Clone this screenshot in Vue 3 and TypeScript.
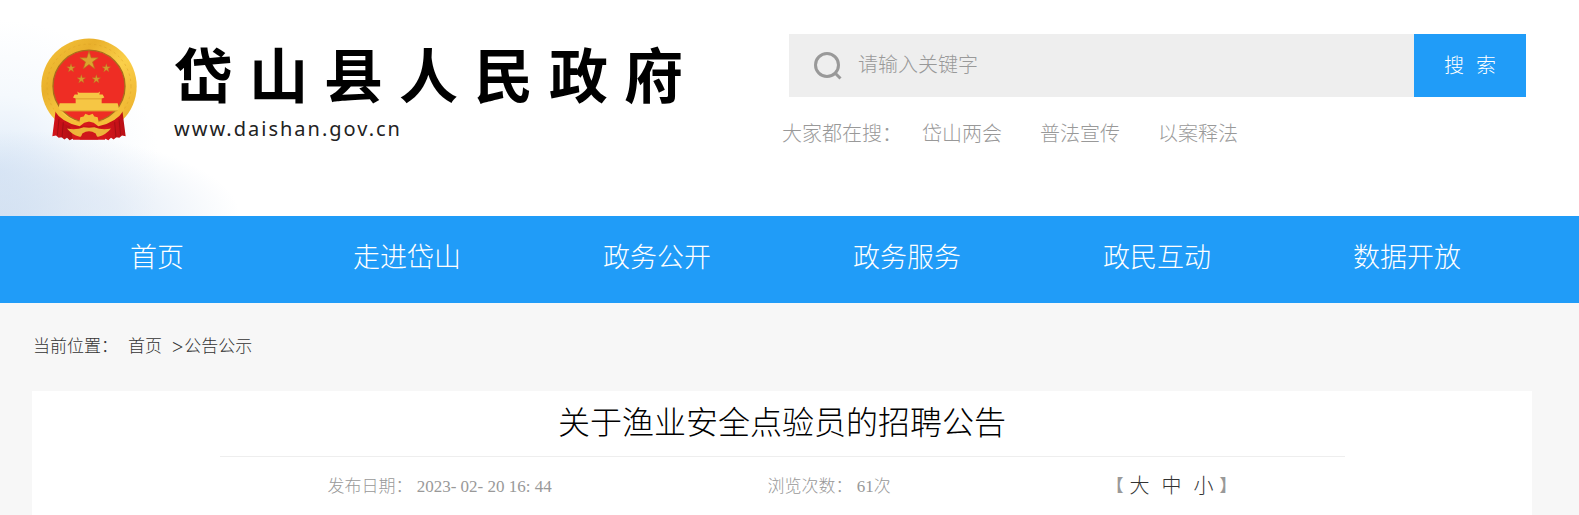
<script setup lang="ts">
import { ref } from 'vue'

const siteName: string[] = [...'岱山县人民政府']
const keyword = ref('')
const hotWords: string[] = ['岱山两会', '普法宣传', '以案释法']
const navItems: string[] = ['首页', '走进岱山', '政务公开', '政务服务', '政民互动', '数据开放']
const textSizes: string[] = ['大', '中', '小']
const smallStars = [
  { x: 124, y: 114, r: 14 },
  { x: 230, y: 114, r: 14 },
  { x: 155, y: 147, r: 14 },
  { x: 200, y: 147, r: 14 },
]

function star(cx: number, cy: number, r: number): string {
  const points: string[] = []
  for (let i = 0; i < 10; i++) {
    const radius = i % 2 === 0 ? r : r * 0.38
    const angle = -Math.PI / 2 + (i * Math.PI) / 5
    points.push(`${(cx + radius * Math.cos(angle)).toFixed(1)},${(cy + radius * Math.sin(angle)).toFixed(1)}`)
  }
  return points.join(' ')
}
</script>

<template>
  <div class="page">
    <header class="header">
      <div class="container header-row">
        <a class="brand" href="#">
          <svg class="emblem" viewBox="34 24 288 308" aria-hidden="true">
            <defs>
              <linearGradient id="gold" x1="0" y1="0" x2="1" y2="1">
                <stop offset="0" stop-color="#f7c63a" />
                <stop offset="0.3" stop-color="#e9b02c" />
                <stop offset="0.55" stop-color="#fbd04a" />
                <stop offset="1" stop-color="#e8a824" />
              </linearGradient>
              <linearGradient id="drape" x1="0" y1="0" x2="1" y2="0">
                <stop offset="0" stop-color="#d3141a" />
                <stop offset="0.35" stop-color="#a80d12" />
                <stop offset="0.6" stop-color="#e0191f" />
                <stop offset="1" stop-color="#b90f15" />
              </linearGradient>
            </defs>
            <circle cx="178" cy="168" r="143" fill="url(#gold)" />
            <circle cx="178" cy="168" r="126" fill="none" stroke="#dba126" stroke-width="3" stroke-dasharray="7 9" opacity="0.5" />
            <circle cx="178" cy="168" r="108" fill="#ee2d24" stroke="#a96c1c" stroke-width="4" />
            <polygon :points="star(178, 92, 29)" fill="#dba52f" stroke="#b9701d" stroke-width="2" />
            <polygon v-for="s in smallStars" :key="`${s.x}-${s.y}`" :points="star(s.x, s.y, s.r)" fill="#d59a2d" stroke="#b9601d" stroke-width="1" />
            <path d="M143 184l5 4h58l5-4-2 9h10l5 9-8 3v14h48l6 24H84l6-24h48v-14l-8-3 5-9h10z" fill="#f6c644" />
            <path d="M136 206h82M88 242h180" stroke="#cf8d22" stroke-width="2" />
            <path d="M78 240q14 24 53 33l22 5-21 46-12 6-8-7-8 5-8-7-9 2-8-7-11 2zM278 240q-14 24-53 33l-22 5 21 46 12 6 8-7 8 5 8-7 9 2 8-7 11 2z" fill="url(#drape)" />
            <path d="M118 275h120l-12 54H130z" fill="#d7181c" />
            <path d="M79 243q23 37 71 43l28 2 28-2q48-6 71-43l-7 28q-32 26-92 27-60-1-92-27z" fill="#c91218" />
            <path d="M76 214q20 48 73 62l3-15 10-2 5-8 11 4 11-4 5 8 10 2 3 15q53-14 73-62l4 24q-24 40-78 50l-14-10-14-4-14 4-14 10q-54-10-78-50z" fill="#f4be38" />
            <path d="M112 295q27 6 50-4l16 2 16-2q23 10 50 4-14 18-38 25l-28-2-28 2q-24-7-38-25z" fill="#edb43a" />
            <path d="M158 310q20-14 40 0l8 18h-56z" fill="#cf171b" />
            <path d="M88 266l-5 50M101 276l-4 46M268 266l5 50M255 276l4 46" stroke="#8e0b10" stroke-width="3" opacity="0.6" />
          </svg>
          <span class="brand-text">
            <strong class="site-name">
              <span v-for="char in siteName" :key="char">{{ char }}</span>
            </strong>
            <span class="site-url">www.daishan.gov.cn</span>
          </span>
        </a>

        <div class="search-area">
          <form class="search" role="search" @submit.prevent>
            <label class="search-field">
              <svg class="search-icon" viewBox="0 0 28 28" aria-hidden="true">
                <circle cx="13" cy="13" r="11.5" />
                <path d="M20.5 20.5l6 6" />
              </svg>
              <input v-model="keyword" class="search-input" type="text" placeholder="请输入关键字" aria-label="请输入关键字" />
            </label>
            <button class="search-button" type="submit"><span>搜</span><span>索</span></button>
          </form>
          <div class="hot">
            <span>大家都在搜：</span>
            <div class="hot-words">
              <a v-for="word in hotWords" :key="word" href="#">{{ word }}</a>
            </div>
          </div>
        </div>
      </div>
    </header>

    <nav class="nav">
      <div class="container nav-row">
        <a v-for="item in navItems" :key="item" href="#">{{ item }}</a>
      </div>
    </nav>

    <main class="container main">
      <div class="breadcrumb">
        <span>当前位置：</span>
        <a href="#">首页</a>
        <span class="current"><span class="separator">&gt;</span><a href="#">公告公示</a></span>
      </div>
      <article class="article">
        <h1 class="title">关于渔业安全点验员的招聘公告</h1>
        <div class="meta">
          <span>发布日期： 2023- 02- 20 16: 44</span>
          <span>浏览次数： 61次</span>
          <div class="sizes">
            <span class="bracket">【</span>
            <div class="size-buttons">
              <button v-for="size in textSizes" :key="size" type="button">{{ size }}</button>
            </div>
            <span class="bracket">】</span>
          </div>
        </div>
      </article>
    </main>
  </div>
</template>

<style>
body {
  margin: 0;
  background: #f7f7f7;
}
</style>

<style scoped>
.page {
  font-family: "Liberation Serif", "Noto Sans CJK SC", serif;
  font-weight: 300;
  color: #333;
}

a {
  color: inherit;
  text-decoration: none;
}

button,
input {
  padding: 0;
  border: 0;
  background: none;
  font: inherit;
  color: inherit;
}

button {
  cursor: pointer;
}

.container {
  padding: 0 47px 0 32px;
}

.header {
  background:
    radial-gradient(ellipse 240px 86px at 0 100%, rgba(196, 214, 236, 0.6), rgba(206, 221, 240, 0.5) 50%, rgba(255, 255, 255, 0)),
    radial-gradient(ellipse 160px 150px at 0 170px, rgba(215, 230, 247, 0.8), rgba(235, 243, 251, 0.5) 50%, rgba(255, 255, 255, 0)),
    #fff;
}

.header-row {
  display: flex;
  justify-content: space-between;
  align-items: flex-start;
  min-height: 216px;
}

.brand {
  display: flex;
  gap: 37px;
  padding: 38px 0 0 9px;
  color: #000;
}

.emblem {
  width: 96px;
  height: 103px;
}

.brand-text {
  display: flex;
  flex-direction: column;
}

.site-name {
  display: flex;
  gap: 16px;
  padding-top: 3px;
  font-size: 59px;
  font-weight: 700;
  line-height: 74px;
}

.site-url {
  font-family: "Noto Sans", sans-serif;
  font-size: 20px;
  font-weight: 400;
  letter-spacing: 2px;
  line-height: 28px;
  color: #222;
}

.search-area {
  width: 50%;
  padding-top: 34px;
  font-size: 20px;
  color: #999;
}

.search {
  display: flex;
  height: 63px;
  margin: 0 6px 0 7px;
}

.search-field {
  display: flex;
  flex: 1;
  align-items: center;
  gap: 16px;
  padding-left: 25px;
  background: #eee;
}

.search-icon {
  width: 28px;
  height: 28px;
  fill: none;
  stroke: #999;
  stroke-width: 3;
}

.search-input {
  flex: 1;
  min-width: 0;
  outline: none;
}

.search-input::placeholder {
  color: #999;
  opacity: 1;
}

.search-button {
  display: flex;
  justify-content: center;
  align-items: center;
  gap: 12px;
  width: 112px;
  padding-bottom: 3px;
  background: #209cf8;
  color: #fff;
}

.hot {
  display: flex;
  gap: 20px;
  padding-top: 21px;
  line-height: 32px;
}

.hot-words {
  display: flex;
  gap: 38px;
}

.nav {
  background: #209cf8;
  color: #fff;
}

.nav-row {
  display: grid;
  grid-template-columns: repeat(6, 1fr);
  padding-bottom: 2px;
  font-size: 27px;
  line-height: 85px;
  text-align: center;
}

.breadcrumb {
  display: flex;
  gap: 10px;
  padding: 0 1px;
  font-size: 17px;
  line-height: 88px;
}

.current {
  display: flex;
  gap: 1px;
}

.separator {
  font-size: 20px;
}

.article {
  min-height: 124px;
  background: #fff;
  color: #000;
}

.title {
  width: 75%;
  margin: 0 auto;
  border-bottom: 1px solid #eee;
  font-size: 32px;
  font-weight: 300;
  line-height: 65px;
  text-align: center;
}

.meta {
  display: flex;
  justify-content: space-around;
  width: 75%;
  margin: 0 auto;
  font-size: 17px;
  line-height: 59px;
  color: #999;
}

.sizes {
  display: flex;
  gap: 6px;
}

.bracket {
  font-weight: 700;
}

.size-buttons {
  display: flex;
  gap: 12px;
  font-size: 20px;
  color: #333;
}
</style>
